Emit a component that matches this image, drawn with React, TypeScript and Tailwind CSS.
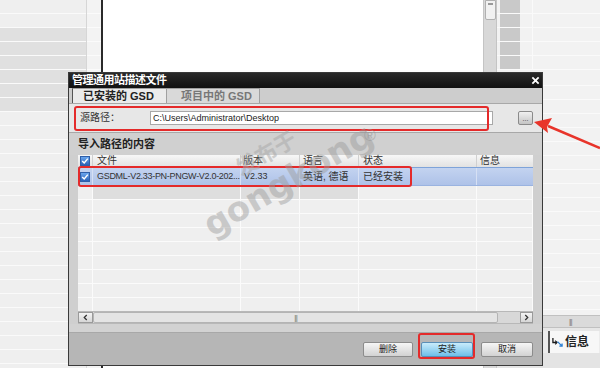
import React from "react";

function Check() {
  return (
    <span className="flex h-[10px] w-[10px] items-center justify-center border border-[#2f5fa8] bg-linear-to-b from-[#6aa6ee] to-[#2a62b8]">
      <svg viewBox="0 0 10 10" className="h-[8px] w-[8px]">
        <path d="M1.5 5 L4 7.5 L8.5 2" fill="none" stroke="white" strokeWidth="1.8" />
      </svg>
    </span>
  );
}

const COLS = [15, 148, 59, 59, 118, 56];

function EmptyRow({ dark }: { dark?: boolean }) {
  return (
    <div className="flex h-[14px] shrink-0 border-b border-[#fbfbfb]">
      {COLS.map((w, i) => (
        <div
          key={i}
          style={{ width: w }}
          className={`h-full border-r border-[#fbfbfb] ${dark && i >= 1 && i <= 3 ? "bg-[#dedede]" : "bg-[#efefef]"}`}
        />
      ))}
    </div>
  );
}

export default function App() {
  const leftRows = Array.from({ length: 27 }, (_, i) => i);
  const rightRows = Array.from({ length: 18 }, (_, i) => i);
  return (
    <div className="relative h-[368px] w-[600px] overflow-hidden bg-white font-['Liberation_Sans','Noto_Sans_CJK_SC',sans-serif] text-[#222]">
      {/* background application */}
      <div className="flex h-full">
        <div className="flex w-[86px] flex-col">
          {leftRows.map((i) => (
            <div
              key={i}
              className={`h-[14px] shrink-0 border-b border-[#fafafa] ${i >= 2 && i <= 7 ? "bg-[#e0e0e0]" : "bg-[#efefef]"}`}
            />
          ))}
        </div>
        <div className="flex w-[15px] flex-col border-l border-[#d6d6d6] bg-[#f3f3f3]">
          {leftRows.map((i) => (
            <div key={i} className="h-[14px] shrink-0 border-b border-[#fbfbfb]" />
          ))}
        </div>
        <div className="w-[2px] bg-[#2a2a2a]" />
        <div className="w-[380px] bg-white" />
        <div className="flex w-[14px] flex-col items-center border-x border-[#c4c4c4] bg-[#d8d8d8]">
          <div className="flex h-[20px] w-[11px] items-start justify-center rounded-b-[2px] border border-[#b0b0b0] bg-[#f1f1f1] pt-[2px]">
            <div className="h-[2px] w-[5px] border-y border-[#999]" />
          </div>
        </div>
        <div className="flex flex-1 flex-col bg-[#f2f2f2]">
          {[0, 1, 2, 3, 4].map((i) => (
            <div key={i} className="flex h-[14px] shrink-0 border-b border-[#fafafa]">
              <div className="w-[3px]" />
              <div className="w-[20px] bg-[#c9c9c9]" />
              <div className="w-[13px] border-r border-[#fafafa]" />
              <div className="flex-1" />
            </div>
          ))}
          <div className="h-[2px] shrink-0" />
          <div className="flex h-[243px] shrink-0 flex-col overflow-hidden">
            {rightRows.map((i) => (
              <div key={i} className="h-[14px] shrink-0 border-b border-[#fafafa]" />
            ))}
          </div>
          <div className="flex h-[13px] shrink-0 items-center border-y border-[#c0c0c0] bg-[#dadada] pl-[72px]">
            <span className="text-[7px] leading-none tracking-[-1px] text-[#777]">|||</span>
          </div>
          <div className="h-[3px] shrink-0 bg-[#e6e6e6]" />
          <div className="flex h-[22px] shrink-0 bg-[#ececec]">
            <div className="ml-[51px] flex items-center gap-[2px] border-l-2 border-[#555] bg-[#f7f7f7] pl-[2px] pr-[10px]">
              <svg viewBox="0 0 12 12" className="h-[11px] w-[11px]">
                <path d="M1 1 L1 6 L5 6" fill="none" stroke="#1a1a1a" strokeWidth="1.4" />
                <path d="M3.5 4 L5.5 6 L3.5 8" fill="none" stroke="#1a1a1a" strokeWidth="1.2" />
                <path d="M6 5 L11 10 M8 10 L11 10 L11 7" fill="none" stroke="#2a7fd4" strokeWidth="1.4" />
              </svg>
              <span className="text-[12px] font-bold leading-none text-[#222]">信息</span>
            </div>
          </div>
          <div className="flex-1 bg-[#e4e4e4]" />
        </div>
      </div>

      {/* dialog */}
      <div className="absolute left-[68px] top-[72px] flex h-[294px] w-[475px] flex-col border border-[#3a3a3a] bg-[#cfcfcf]">
        <div className="flex h-[15px] shrink-0 items-center justify-between bg-linear-to-b from-[#2a2a2a] to-[#111] pl-[3px] pr-[2px]">
          <span className="text-[11px] font-bold leading-none tracking-[-0.5px] text-white">管理通用站描述文件</span>
          <svg viewBox="0 0 10 10" className="h-[9px] w-[9px]">
            <path d="M1.5 1.5 L8.5 8.5 M8.5 1.5 L1.5 8.5" stroke="white" strokeWidth="2" />
          </svg>
        </div>
        <div className="flex h-[15px] shrink-0 items-end bg-[#cdcdcd] pl-[3px]">
          <div className="flex h-[15px] w-[95px] items-center border-l border-r border-t border-l-[#555] border-r-[#a0a0a0] border-t-[#a0a0a0] bg-[#ebebeb] pl-[10px] text-[11px] font-bold leading-none text-[#222]">
            已安装的 GSD
          </div>
          <div className="flex h-[15px] w-[93px] items-center border-r border-t border-[#a0a0a0] bg-[#d9d9d9] pl-[14px] text-[11px] font-bold leading-none text-[#777]">
            项目中的 GSD
          </div>
        </div>
        <div className="flex h-[30px] shrink-0 items-center border-y border-[#a8a8a8] bg-[#e7e7e7] pl-[11px] pr-[9px]">
          <span className="w-[70px] text-[10px] leading-none text-[#333]">源路径：</span>
          <div className="flex h-[14px] w-[343px] items-center border border-[#a8a8a8] bg-white pl-[2px] text-[9px] leading-none text-[#222]">
            C:\Users\Administrator\Desktop
          </div>
          <div className="ml-auto flex h-[14px] w-[15px] items-center justify-center rounded-[2px] border border-[#8a8a8a] bg-linear-to-b from-[#f0f0f0] to-[#c4c4c4] text-[7px] leading-none text-[#333]">
            ...
          </div>
        </div>
        <div className="flex h-[22px] shrink-0 items-center bg-[#d0d0d0] pl-[9px] text-[11px] font-bold leading-none text-[#222]">
          导入路径的内容
        </div>
        <div className="mx-[9px] flex h-[169px] shrink-0 flex-col bg-[#efefef]">
          <div className="flex h-[13px] shrink-0 border-b border-[#7ea3d9] bg-linear-to-b from-[#f7f7f7] to-[#e2e2e2] text-[10px] leading-none text-[#333]">
            <div style={{ width: COLS[0] }} className="flex items-center justify-center border-r border-[#d0d0d0]">
              <Check />
            </div>
            <div style={{ width: COLS[1] }} className="flex items-center border-r border-[#d0d0d0] pl-[4px]">文件</div>
            <div style={{ width: COLS[2] }} className="flex items-center border-r border-[#d0d0d0] pl-[2px]">版本</div>
            <div style={{ width: COLS[3] }} className="flex items-center border-r border-[#d0d0d0] pl-[3px]">语言</div>
            <div style={{ width: COLS[4] }} className="flex items-center border-r border-[#d0d0d0] pl-[4px]">状态</div>
            <div style={{ width: COLS[5] }} className="flex items-center pl-[3px]">信息</div>
          </div>
          <div className="flex h-[18px] shrink-0 border-b border-[#9ab3e0] bg-linear-to-b from-[#c3d3f0] to-[#aec2e8] text-[9px] leading-none text-[#333]">
            <div style={{ width: COLS[0] }} className="flex items-center justify-center border-r border-[#d6e0f4]">
              <Check />
            </div>
            <div style={{ width: COLS[1] }} className="flex items-center border-r border-[#d6e0f4] pl-[4px] tracking-[-0.3px]">
              GSDML-V2.33-PN-PNGW-V2.0-202...
            </div>
            <div style={{ width: COLS[2] }} className="flex items-center border-r border-[#d6e0f4] pl-[3px]">V2.33</div>
            <div style={{ width: COLS[3] }} className="flex items-center border-r border-[#d6e0f4] pl-[3px] text-[10px]">英语, 德语</div>
            <div style={{ width: COLS[4] }} className="flex items-center border-r border-[#d6e0f4] pl-[4px] text-[10px]">已经安装</div>
            <div style={{ width: COLS[5] }} />
          </div>
          <div className="flex flex-1 flex-col overflow-hidden">
            {Array.from({ length: 9 }, (_, i) => (
              <EmptyRow key={i} dark={i === 0} />
            ))}
          </div>
          <div className="flex h-[13px] shrink-0 border-y border-[#b8b8b8] bg-[#d8d8d8]">
            <div className="flex w-[15px] items-center justify-center border border-[#9a9a9a] bg-linear-to-b from-[#f4f4f4] to-[#d6d6d6]">
              <svg viewBox="0 0 6 8" className="h-[7px] w-[5px]">
                <path d="M4.5 1 L1.5 4 L4.5 7" fill="none" stroke="#333" strokeWidth="1.5" />
              </svg>
            </div>
            <div className="flex w-[405px] items-center justify-center rounded-[2px] border border-[#b4b4b4] bg-[#e4e4e4]">
              <span className="text-[7px] leading-none tracking-[-1px] text-[#777]">|||</span>
            </div>
            <div className="flex-1" />
            <div className="flex w-[13px] items-center justify-center border border-[#9a9a9a] bg-linear-to-b from-[#f4f4f4] to-[#d6d6d6]">
              <svg viewBox="0 0 6 8" className="h-[7px] w-[5px]">
                <path d="M1.5 1 L4.5 4 L1.5 7" fill="none" stroke="#333" strokeWidth="1.5" />
              </svg>
            </div>
          </div>
        </div>
        <div className="h-[9px] shrink-0 border-b border-[#a8a8a8] bg-[#d2d2d2]" />
        <div className="flex h-[32px] shrink-0 items-center justify-end gap-[8px] bg-[#b6b6b6] pr-[9px] text-[9px] leading-none text-[#222]">
          <div className="flex h-[15px] w-[50px] items-center justify-center rounded-[2px] border border-[#8c8c8c] bg-linear-to-b from-[#f6f6f6] to-[#d2d2d2]">删除</div>
          <div className="flex h-[15px] w-[52px] items-center justify-center rounded-[2px] border border-[#5a8fb8] bg-linear-to-b from-[#c8ecfb] to-[#6cbfe9]">安装</div>
          <div className="flex h-[15px] w-[52px] items-center justify-center rounded-[2px] border border-[#8c8c8c] bg-linear-to-b from-[#f6f6f6] to-[#d2d2d2]">取消</div>
        </div>
      </div>

      {/* annotation overlays */}
      <div className="pointer-events-none absolute left-[74px] top-[106px] h-[25px] w-[415px] rounded-[3px] border-2 border-[#e42a2a]" />
      <div className="pointer-events-none absolute left-[78px] top-[166px] h-[21px] w-[334px] rounded-[3px] border-2 border-[#e42a2a]" />
      <div className="pointer-events-none absolute left-[418px] top-[333px] h-[26px] w-[57px] rounded-[3px] border-2 border-[#e42a2a]" />
      <svg className="pointer-events-none absolute left-0 top-0" width="600" height="368" viewBox="0 0 600 368">
        <path d="M600 148 L548 126" stroke="#e8342a" strokeWidth="2.5" />
        <path d="M534 122 L552 118 L547 127 L548 133 Z" fill="#e8342a" />
      </svg>

      {/* watermark */}
      <div className="pointer-events-none absolute left-[238px] top-[160px] origin-left -rotate-[30deg] text-[22px] font-bold leading-none text-[#a8a8a8] opacity-50">
        发布于
      </div>
      <div className="pointer-events-none absolute left-[206px] top-[210px] origin-left -rotate-[30deg] font-['DejaVu_Sans',sans-serif] text-[34px] font-bold leading-none text-[#9a9a9a] opacity-45">
        gongkong
      </div>
      <div className="pointer-events-none absolute left-[364px] top-[128px] text-[16px] leading-none text-[#9a9a9a] opacity-60">
        ®
      </div>
    </div>
  );
}
